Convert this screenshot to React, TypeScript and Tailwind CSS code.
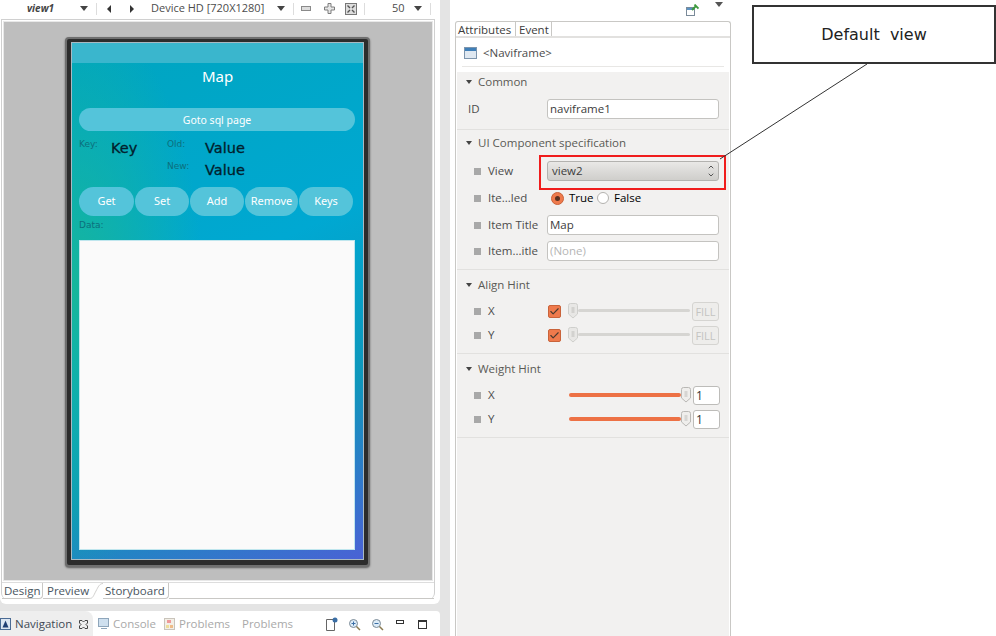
import { ChevronDown, ChevronUp, Check } from "lucide-react";

function Caret({ className = "" }: { className?: string }) {
    return <span className={"inline-block w-0 h-0 border-x-[4px] border-x-transparent border-t-[5px] border-t-[#444] shrink-0 " + className}></span>;
}

function SectionTitle({ title }: { title: string }) {
    return (
        <div className="flex items-center h-[20px] pl-[9px] gap-[6px] text-[#5a5a55]">
            <span className="inline-block w-0 h-0 border-x-[3px] border-x-transparent border-t-[4px] border-t-[#444] shrink-0"></span>
            <span>{title}</span>
        </div>
    );
}

function Bullet() {
    return <span className="w-[7px] h-[7px] bg-[#a8a8a8] mr-[7px] shrink-0"></span>;
}

function RowLabel({ text }: { text: string }) {
    return (
        <div className="flex items-center w-[90px] pl-[17px] shrink-0 text-[#4c4c4c]">
            <Bullet />
            <span>{text}</span>
        </div>
    );
}

function Thumb({ disabled }: { disabled?: boolean }) {
    return (
        <svg width="10" height="16" viewBox="0 0 10 16" className="shrink-0">
            <path d="M.5 2.5 Q.5 .5 2.5 .5 H7.5 Q9.5 .5 9.5 2.5 V11 L5 15 L.5 11 Z" fill={disabled ? "#e8e7e5" : "#efeeec"} stroke={disabled ? "#cfcfcc" : "#b9b8b5"} />
            <path d="M3.5 5 H6.5 M3.5 7 H6.5 M3.5 9 H6.5" stroke="#bdbcb9" />
        </svg>
    );
}

function AlignRow({ label }: { label: string }) {
    return (
        <div className="flex items-center h-[24px]">
            <RowLabel text={label} />
            <div className="w-[13px] h-[13px] ml-[1px] rounded-[2px] bg-[#ef7a4c] border border-[#c9633a] flex items-center justify-center shrink-0">
                <Check size={11} strokeWidth={2.5} color="#4b3a30" />
            </div>
            <div className="flex items-center ml-[7px] w-[122px] shrink-0">
                <Thumb disabled />
                <div className="flex-1 h-[3px] rounded-full bg-[#d6d5d2] -mt-[2px]"></div>
            </div>
            <div className="ml-[2px] w-[27px] h-[19px] rounded-[3px] border border-[#d5d4d1] bg-[#eeedeb] text-[#c4c4c2] text-[11px] leading-[17px] text-center">FILL</div>
        </div>
    );
}

function WeightRow({ label }: { label: string }) {
    return (
        <div className="flex items-center h-[24px]">
            <RowLabel text={label} />
            <div className="flex items-center ml-[22px] w-[122px] shrink-0">
                <div className="flex-1 h-[4px] rounded-full bg-[#ed7145] -mt-[1px]"></div>
                <Thumb />
            </div>
            <div className="ml-[2px] w-[27px] h-[19px] rounded-[3px] border border-[#bdbcb9] bg-white text-[#333] text-[12px] leading-[17px] pl-[2px]">1</div>
        </div>
    );
}

function TextField({ value, muted }: { value: string; muted?: boolean }) {
    return (
        <div className={"w-[172px] h-[20px] rounded-[3px] border border-[#c4c3c0] bg-white pl-[2px] leading-[18px] " + (muted ? "text-[#b5b5b5]" : "text-[#3c3c3c]")}>
            {value}
        </div>
    );
}

function DeviceButton({ text, width }: { text: string; width: string }) {
    return (
        <div className={"h-[29px] rounded-full bg-[#54c4da] text-white text-[11px] flex items-center justify-center " + width}>{text}</div>
    );
}

function Phone() {
    return (
        <div className="w-[305px] h-[530px] rounded-[4px] bg-[#2c2c2c] border-2 border-[#6f6f6f] shadow-[0_1px_2px_rgba(0,0,0,0.5)] pt-[3px] px-[4px] pb-[5px]">
            <div className="h-full border border-[#a9b9c2] flex flex-col font-['Noto_Sans',sans-serif] bg-[radial-gradient(ellipse_45%_55%_at_0%_48%,#17b69b_0%,rgba(23,182,155,0)_100%),linear-gradient(155deg,#00a5bf_0%,#00a8d2_45%,#0e97bb_72%,#4a62d5_100%)]">
                <div className="h-[20px] bg-[#3ab6cd] shrink-0"></div>
                <div className="text-center text-white text-[15px] leading-[20px] mt-[3px]">Map</div>
                <div className="ml-[7px] mr-[8px] mt-[22px] h-[23px] pt-[2px] rounded-full bg-[#54c4da] text-white text-[10.5px] flex items-center justify-center">Goto sql page</div>
                <div className="flex mx-[7px] mt-[6px] h-[51px] font-['DejaVu_Sans',sans-serif]">
                    <div className="w-[32px] text-[9px] text-[#0c6f7c] leading-[12px] mt-[1px]">Key:</div>
                    <div className="w-[56px] text-[14.5px] text-[#02202c] leading-[20px] mt-[1px] [-webkit-text-stroke:0.3px_#02202c]">Key</div>
                    <div className="w-[38px] text-[9px] text-[#0c6f7c] leading-[12px]">
                        <div className="mt-[1px]">Old:</div>
                        <div className="mt-[10px]">New:</div>
                    </div>
                    <div className="text-[14.5px] text-[#02202c] leading-[22px] [-webkit-text-stroke:0.3px_#02202c]">
                        <div>Value</div>
                        <div>Value</div>
                    </div>
                </div>
                <div className="flex mx-[7px] mt-[-1px] gap-[1px]">
                    <DeviceButton text="Get" width="w-[55px]" />
                    <DeviceButton text="Set" width="w-[54px]" />
                    <DeviceButton text="Add" width="w-[54px]" />
                    <DeviceButton text="Remove" width="w-[53px]" />
                    <DeviceButton text="Keys" width="w-[54px]" />
                </div>
                <div className="mx-[7px] mt-[3px] text-[9px] text-[#0c6f7c] leading-[12px] font-['DejaVu_Sans',sans-serif]">Data:</div>
                <div className="ml-[7px] mr-[8px] mt-[9px] h-[310px] bg-[#fafafa] border border-[#bfe6ee]"></div>
            </div>
        </div>
    );
}

function Separator({ className = "" }: { className?: string }) {
    return <span className={"w-px h-[12px] bg-[#ddd] shrink-0 " + className}></span>;
}

function Toolbar() {
    return (
        <div className="h-[19px] pb-[2px] flex items-center text-[11px] text-[#4c4c4c]">
            <span className="ml-[27px] w-[53px] italic font-bold text-[10px] text-[#444]">view1</span>
            <Caret />
            <Separator className="ml-[8px]" />
            <span className="ml-[10px] w-0 h-0 border-y-[4px] border-y-transparent border-r-[4px] border-r-[#333]"></span>
            <span className="ml-[19px] w-0 h-0 border-y-[4px] border-y-transparent border-l-[4px] border-l-[#333]"></span>
            <span className="ml-[17px] w-[126px] whitespace-nowrap">Device HD [720X1280]</span>
            <Caret />
            <Separator className="ml-[8px]" />
            <span className="ml-[7px] w-[10px] h-[5px] border border-[#8a8a8a] bg-[#ddd]"></span>
            <svg width="11" height="11" viewBox="0 0 11 11" className="ml-[13px]">
                <path d="M4 .5 H7 V4 H10.5 V7 H7 V10.5 H4 V7 H.5 V4 H4 Z" fill="#e6e6e6" stroke="#7d7d7d" />
            </svg>
            <svg width="12" height="12" viewBox="0 0 12 12" className="ml-[10px]">
                <rect x=".5" y=".5" width="11" height="11" fill="#ddd" stroke="#777" />
                <path d="M2.5 2.5 L5 5 M9.5 2.5 L7 5 M2.5 9.5 L5 7 M9.5 9.5 L7 7" stroke="#555" strokeWidth="1.4" />
            </svg>
            <Separator className="ml-[7px]" />
            <span className="ml-[27px] w-[22px]">50</span>
            <Caret />
            <Separator className="ml-[8px]" />
        </div>
    );
}

function EditorTabs() {
    return (
        <div className="flex h-[17px] text-[#4a5560] border-t border-[#ddd] leading-[15px]">
            <span className="w-[41px] pl-[2px] border-r border-b border-[#c9c8c5] rounded-br-[4px]">Design</span>
            <span className="w-[42px] pl-[4px] border-b border-[#c9c8c5] box-content">Preview</span>
            <svg width="14" height="16" viewBox="0 0 20 16" preserveAspectRatio="none" className="shrink-0" fill="none">
                <path d="M0 15.5 C6 15.5 6 13 10 8 C13 4 15 .5 20 .5" stroke="#c9c8c5" />
            </svg>
            <span className="w-[66px] pl-[2px] border-r border-b border-[#c9c8c5] rounded-br-[4px]">Storyboard</span>
            <span className="flex-1 border-b border-[#c9c8c5]"></span>
        </div>
    );
}

function BottomTabs() {
    return (
        <div className="h-[25px] mt-[7px] pt-[1px] bg-white rounded-t-[4px] flex items-center text-[#a9a9a9]">
            <div className="flex items-center h-[25px] -mt-[1px] pt-[1px] w-[93px] bg-[#eeeeee] rounded-tr-[8px] text-[#3f4a55] shrink-0">
                <svg width="11" height="12" viewBox="0 0 11 12" className="shrink-0">
                    <rect x=".5" y=".5" width="10" height="11" fill="#dce6f2" stroke="#4a6b94" />
                    <path d="M5.5 2.5 L8.5 9.5 H2.5 Z" fill="#1f3f73" />
                </svg>
                <span className="ml-[4px] w-[64px]">Navigation</span>
                <svg width="9" height="9" viewBox="0 0 9 9" fill="none" className="shrink-0">
                    <path d="M.5 .5 H3 L4.5 2 L6 .5 H8.5 V3 L7 4.5 L8.5 6 V8.5 H6 L4.5 7 L3 8.5 H.5 V6 L2 4.5 L.5 3 Z" stroke="#444" />
                </svg>
            </div>
            <svg width="12" height="12" viewBox="0 0 12 12" className="ml-[5px] shrink-0">
                <rect x=".5" y=".5" width="10" height="8" fill="#cfe0ef" stroke="#8fa6bb" />
                <path d="M3 10.5 H9" stroke="#8fa6bb" />
            </svg>
            <span className="ml-[3px] w-[44px]">Console</span>
            <svg width="11" height="12" viewBox="0 0 11 12" className="ml-[7px] shrink-0">
                <rect x=".5" y=".5" width="10" height="11" fill="#f3efe6" stroke="#c9c4bb" />
                <rect x="3" y="2" width="4" height="3" fill="#e99" />
                <rect x="2" y="7" width="3" height="3" fill="#ed9" />
                <rect x="6" y="7" width="3" height="3" fill="#eb8" />
            </svg>
            <span className="ml-[4px] w-[52px]">Problems</span>
            <span className="ml-[11px]">Problems</span>
            <div className="ml-auto mr-[13px] flex items-center shrink-0">
                <svg width="12" height="14" viewBox="0 0 12 14">
                    <path d="M.5 2.5 H8.5 V13.5 H.5 Z" fill="#fff" stroke="#666" />
                    <circle cx="9" cy="3" r="2.5" fill="#3a6ea5" />
                </svg>
                <svg width="13" height="13" viewBox="0 0 13 13" className="ml-[10px]" fill="none">
                    <circle cx="5.5" cy="5.5" r="4" fill="#dcebf7" stroke="#7b8a96" />
                    <path d="M8.5 8.5 L12 12" stroke="#8a7a50" strokeWidth="1.5" />
                    <path d="M3.5 5.5 H7.5 M5.5 3.5 V7.5" stroke="#3a6ea5" />
                </svg>
                <svg width="13" height="13" viewBox="0 0 13 13" className="ml-[10px]" fill="none">
                    <circle cx="5.5" cy="5.5" r="4" fill="#dcebf7" stroke="#7b8a96" />
                    <path d="M8.5 8.5 L12 12" stroke="#8a7a50" strokeWidth="1.5" />
                    <path d="M3.5 5.5 H7.5" stroke="#3a6ea5" />
                </svg>
                <span className="ml-[12px] w-[8px] h-[4px] border border-[#333] bg-white -mt-[5px]"></span>
                <span className="ml-[14px] w-[9px] h-[9px] border border-[#333] border-t-2 bg-white"></span>
            </div>
        </div>
    );
}

function RightPanel() {
    return (
        <div className="w-[276px] ml-[5px] flex flex-col shrink-0">
            <div className="h-[21px] flex items-center text-[#555]">
                <svg width="13" height="13" viewBox="0 0 13 13" className="ml-[231px]">
                    <rect x=".5" y="3.5" width="8" height="8" fill="#fff" stroke="#7a8a99" />
                    <rect x="1" y="4" width="7" height="2" fill="#5c93c4" />
                    <path d="M6 6 L10 2 M8.5 .5 L12.5 4.5" stroke="#3d9b3d" strokeWidth="1.8" />
                </svg>
                <span className="ml-[16px] -mt-[12px] w-0 h-0 border-x-[4px] border-x-transparent border-t-[5px] border-t-[#555]"></span>
            </div>
            <div className="flex-1 border border-[#c9c8c5] border-b-0 rounded-t-[3px] flex flex-col">
                <div className="flex h-[16px] border-b-2 border-[#e2e1df] text-[#3c3c3c]">
                    <span className="w-[60px] pl-[2px] border-r border-[#c9c8c5] leading-[15px]">Attributes</span>
                    <span className="w-[36px] pl-[3px] border-r border-[#c9c8c5] leading-[15px]">Event</span>
                </div>
                <div className="flex items-center h-[26px] mt-[2px] pl-[8px] text-[#4c4c4c]">
                    <svg width="13" height="12" viewBox="0 0 13 12">
                        <rect x=".5" y=".5" width="12" height="11" fill="#dfe8f1" stroke="#7d95ad" />
                        <rect x="1" y="1" width="11" height="3" fill="#3f7fb8" />
                    </svg>
                    <span className="ml-[6px]">&lt;Naviframe&gt;</span>
                </div>
                <div className="h-px bg-[#e8e7e5] mx-[6px] mb-[5px]"></div>
                <div className="flex-1 bg-[#f2f1f0] mx-px flex flex-col">
                    <div className="h-[58px] border-b border-[#e2e1df]">
                        <SectionTitle title="Common" />
                        <div className="flex items-center mt-[7px]">
                            <span className="w-[90px] pl-[11px] text-[#4c4c4c]">ID</span>
                            <TextField value="naviframe1" />
                        </div>
                    </div>
                    <div className="h-[140px] border-b border-[#e2e1df] pt-[3px]">
                        <SectionTitle title="UI Component specification" />
                        <div className="flex items-center h-[26px] mt-[5px] relative">
                            <RowLabel text="View" />
                            <div className="w-[172px] h-[20px] rounded-[3px] border border-[#b3b2af] bg-gradient-to-b from-[#e9e8e6] to-[#cfcecb] flex items-center justify-between pl-[4px] pr-[3px] text-[#3c3c3c]">
                                <span>view2</span>
                                <span className="flex flex-col">
                                    <ChevronUp size={8} strokeWidth={3} color="#555" />
                                    <ChevronDown size={8} strokeWidth={3} color="#555" />
                                </span>
                            </div>
                            <div className="absolute left-[82px] top-[-3px] w-[187px] h-[35px] border-[2px] border-[#f01c1c]"></div>
                        </div>
                        <div className="flex items-center h-[26px] mt-[1px]">
                            <RowLabel text="Ite...led" />
                            <span className="w-[13px] h-[13px] ml-[4px] rounded-full bg-[#ef7a4c] border border-[#c9633a] flex items-center justify-center shrink-0">
                                <span className="w-[5px] h-[5px] rounded-full bg-[#5a3020]"></span>
                            </span>
                            <span className="ml-[5px] w-[28px]">True</span>
                            <span className="w-[12px] h-[12px] rounded-full bg-white border border-[#b3b2af] shrink-0"></span>
                            <span className="ml-[5px]">False</span>
                        </div>
                        <div className="flex items-center h-[26px] mt-[1px]">
                            <RowLabel text="Item Title" />
                            <TextField value="Map" />
                        </div>
                        <div className="flex items-center h-[26px]">
                            <RowLabel text="Item...itle" />
                            <TextField value="(None)" muted />
                        </div>
                    </div>
                    <div className="h-[84px] border-b border-[#e2e1df] pt-[5px]">
                        <SectionTitle title="Align Hint" />
                        <div className="mt-[4px]">
                            <AlignRow label="X" />
                            <AlignRow label="Y" />
                        </div>
                    </div>
                    <div className="h-[84px] border-b border-[#e2e1df] pt-[5px]">
                        <SectionTitle title="Weight Hint" />
                        <div className="mt-[4px]">
                            <WeightRow label="X" />
                            <WeightRow label="Y" />
                        </div>
                    </div>
                </div>
            </div>
        </div>
    );
}

export default function App() {
    return (
        <div className="w-[996px] h-[636px] bg-white relative overflow-hidden flex font-['Open_Sans',sans-serif] text-[11.5px]">
            <div className="w-[440px] shrink-0 flex flex-col bg-[#e4e4e4]">
                <div className="h-[604px] bg-white rounded-br-[6px] rounded-bl-[6px] shrink-0">
                    <Toolbar />
                    <div className="ml-[1px] mr-[5px] h-[580px] border border-[#d0d0d0] border-b-0 rounded-b-[6px] flex flex-col">
                        <div className="h-[560px] m-[1px] mb-[1px] bg-[#bebebe] border border-[#e8e8e8] flex justify-start pl-[61px] pt-[15px]">
                            <Phone />
                        </div>
                        <EditorTabs />
                    </div>
                </div>
                <BottomTabs />
            </div>
            <div className="w-[10px] shrink-0 bg-[#e4e4e4]"></div>
            <RightPanel />
            <div className="absolute left-[752px] top-[5px] w-[244px] h-[59px] border-[2px] border-[#333] bg-white flex items-center justify-center pt-[1px] font-['DejaVu_Sans',sans-serif] text-[16px] text-[#222] whitespace-pre">Default  view</div>
            <svg width="160" height="110" viewBox="0 0 160 110" className="absolute left-[715px] top-[60px]" fill="none">
                <path d="M5 99 L152 4" stroke="#333" />
            </svg>
        </div>
    );
}
